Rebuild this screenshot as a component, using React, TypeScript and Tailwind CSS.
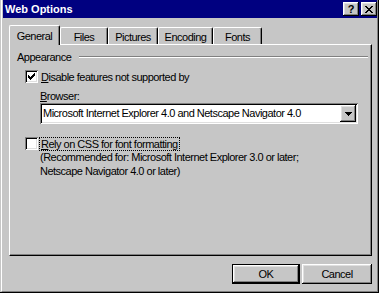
import React from 'react';

const raised =
  'shadow-[inset_-1px_-1px_0_#000,inset_1px_1px_0_#fff,inset_-2px_-2px_0_#808080,inset_2px_2px_0_#dfdfdf]';
const sunken =
  'shadow-[inset_1px_1px_0_#808080,inset_-1px_-1px_0_#fff,inset_2px_2px_0_#000,inset_-2px_-2px_0_#dfdfdf]';

const Checkbox = ({ checked }: { checked?: boolean }) => (
  <div className={`w-[13px] h-[13px] bg-white flex items-center justify-center ${sunken}`}>
    {checked && (
      <svg width="7" height="7" viewBox="0 0 7 7" shapeRendering="crispEdges">
        <path d="M6 0h1v3h-1v1h-1v1h-1v1h-1v1h-1v-1h-1v-1h-1v-3h1v1h1v1h1v-1h1v-1h1z" fill="#000" />
      </svg>
    )}
  </div>
);

const Tab = ({ label, w, active }: { label: string; w: string; active?: boolean }) =>
  active ? (
    <div
      className={`${w} h-[20px] -mb-px relative z-10 bg-[#c6c6c6] border-t border-l border-white border-r border-r-black rounded-t-[2px] shadow-[inset_-1px_0_0_#808080] flex items-center justify-center pt-[1px]`}
    >
      {label}
    </div>
  ) : (
    <div
      className={`${w} h-[17px] border-t border-l border-white border-r border-r-black rounded-t-[2px] shadow-[inset_-1px_0_0_#808080] flex items-center justify-center pt-[2px]`}
    >
      {label}
    </div>
  );

export default function App() {
  return (
    <div className="w-[379px] h-[293px] bg-[#c6c6c6] font-['Liberation_Sans',Arial,sans-serif] text-[11px] text-black border-r border-b border-black flex overflow-hidden">
      <div className="flex-1 flex flex-col ml-px border-l border-r border-b border-[#808080] border-l-white">
        {/* Title bar */}
        <div className="h-[18px] ml-px bg-[#000080] flex items-center justify-between pl-[2px]">
          <span className="font-bold text-white leading-none">Web Options</span>
          <div className="flex gap-[2px]">
            <div className={`w-[16px] h-[14px] bg-[#c6c6c6] flex items-center justify-center font-bold text-[11px] leading-none ${raised}`}>
              ?
            </div>
            <div className={`w-[16px] h-[14px] bg-[#c6c6c6] flex items-center justify-center ${raised}`}>
              <svg width="8" height="7" viewBox="0 0 8 7" shapeRendering="crispEdges">
                <path d="M0 0h2v1h1v1h2v-1h1v-1h2v1h-1v1h-1v1h-1v1h1v1h1v1h1v1h-2v-1h-1v-1h-2v1h-1v1h-2v-1h1v-1h1v-1h1v-1h-1v-1h-1v-1h-1z" fill="#000" />
              </svg>
            </div>
          </div>
        </div>

        <div className="flex-1 flex flex-col pl-[7px] pr-[5px] pt-[7px] tracking-[-0.5px]">
          {/* Tabs */}
          <div className="h-[19px] flex items-end">
            <Tab label="General" w="w-[51px]" active />
            <Tab label="Files" w="w-[48px]" />
            <Tab label="Pictures" w="w-[50px]" />
            <Tab label="Encoding" w="w-[55px]" />
            <Tab label="Fonts" w="w-[49px]" />
          </div>

          {/* Panel */}
          <div className="h-[212px] border border-black border-t-white border-l-white shadow-[inset_-1px_-1px_0_#808080] flex flex-col pl-[7px] pr-[2px]">
            <div className="mt-[5px] h-[14px] flex items-center">
              <span>Appearance</span>
              <div className="flex-1 ml-[8px] mr-[1px] border-t border-b border-t-[#808080] border-b-white" />
            </div>

            <div className="mt-[6px] ml-[8px] h-[13px] flex items-center gap-[3px]">
              <Checkbox checked />
              <span className="leading-[14px]">
                <span className="underline">D</span>isable features not supported by
              </span>
            </div>

            <div className="mt-[6px] ml-[23px] h-[14px] leading-[14px]">
              <span className="underline">B</span>rowser:
            </div>

            <div className={`ml-[23px] w-[318px] h-[21px] bg-white flex items-center pl-[3px] pr-[2px] ${sunken}`}>
              <span className="flex-1 whitespace-nowrap overflow-hidden">
                Microsoft Internet Explorer 4.0 and Netscape Navigator 4.0
              </span>
              <div className={`w-[16px] h-[17px] bg-[#c6c6c6] flex items-center justify-center ${raised}`}>
                <svg width="7" height="4" viewBox="0 0 7 4" shapeRendering="crispEdges">
                  <path d="M0 0h7v1h-1v1h-1v1h-1v1h-1v-1h-1v-1h-1v-1h-1z" fill="#000" />
                </svg>
              </div>
            </div>

            <div className="mt-[13px] ml-[8px] h-[13px] flex items-center gap-[2px]">
              <Checkbox />
              <span className="leading-[12px] px-px outline-1 outline-dotted outline-black">
                <span className="underline">R</span>ely on CSS for font formatting
              </span>
            </div>
            <div className="ml-[23px] leading-[14px]">
              (Recommended for: Microsoft Internet Explorer 3.0 or later;
            </div>
            <div className="ml-[23px] leading-[14px]">Netscape Navigator 4.0 or later)</div>
          </div>

          {/* Buttons */}
          <div className="mt-[8px] h-[20px] flex justify-end gap-[2px]">
            <div className="w-[68px] h-[20px] border border-black">
              <div className={`w-full h-full flex items-center justify-center ${raised}`}>OK</div>
            </div>
            <div className={`w-[70px] h-[20px] flex items-center justify-center ${raised}`}>Cancel</div>
          </div>
        </div>
      </div>
    </div>
  );
}
